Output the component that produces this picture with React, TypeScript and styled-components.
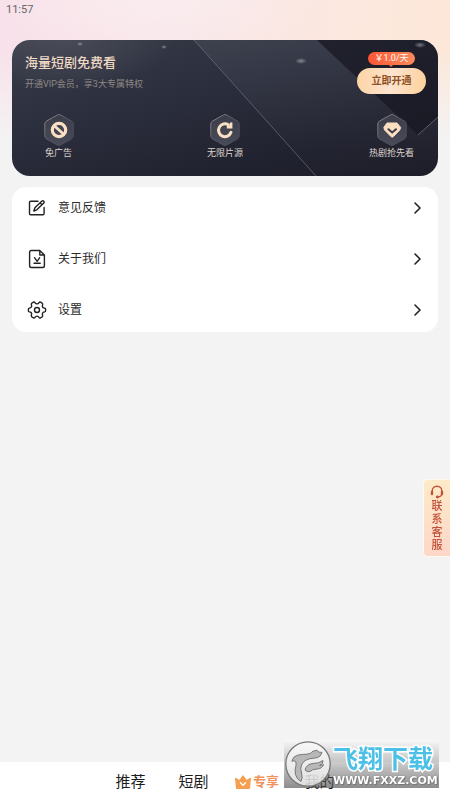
import React from "react";
import styled, { createGlobalStyle, css } from "styled-components";

const GlobalStyle = createGlobalStyle`
  *, *::before, *::after { box-sizing: border-box; }
  body {
    margin: 0;
    background: #f3f3f3;
    font-family: Roboto, "Noto Sans CJK SC", sans-serif;
    color: #2a2a2a;
  }
  button { border: 0; margin: 0; padding: 0; background: none; font: inherit; color: inherit; cursor: pointer; }
  a { color: inherit; text-decoration: none; }
  h1, p, ul { margin: 0; padding: 0; list-style: none; }
`;

const Page = styled.div`
  min-height: 100vh;
  display: flex;
  flex-direction: column;
  background:
    linear-gradient(180deg, rgba(243, 243, 243, 0) 0, rgba(243, 243, 243, 0) 50px, #f3f3f3 140px),
    radial-gradient(ellipse 160px 60px at 35% 0, rgba(250, 238, 240, 0.8), transparent),
    linear-gradient(100deg, #f8e1ea 0%, #f9e6ea 30%, #fce8dc 65%, #fce5d2 100%);
`;

const StatusBar = styled.header`
  height: 20px;
  padding-left: 6px;
  font-size: 11px;
  line-height: 20px;
  color: #666;
`;

const Main = styled.main`
  flex: 1;
  display: flex;
  flex-direction: column;
  gap: 11px;
  padding: 20px 12px;
`;

const VipCard = styled.section`
  position: relative;
  overflow: hidden;
  height: 136px;
  display: flex;
  flex-direction: column;
  justify-content: space-between;
  padding: 12px 12px 15px 13px;
  border-radius: 18px;
  background:
    radial-gradient(ellipse 110px 50px at 12% 0, rgba(110, 104, 118, 0.35), transparent),
    linear-gradient(165deg, #383d49 0%, #2b2e3d 40%, #21222f 75%, #1d1d29 100%);
`;

const CardArt = styled.svg`
  position: absolute;
  inset: 0;
  width: 100%;
  height: 100%;
`;

const VipTop = styled.div`
  position: relative;
  display: flex;
  justify-content: space-between;
`;

const VipTitle = styled.h1`
  font-size: 13px;
  line-height: 21px;
  font-weight: 500;
  color: #f0d9c5;
`;

const VipNote = styled.p`
  font-size: 9px;
  line-height: 22px;
  color: #8f8784;
`;

const Offer = styled.div`
  display: flex;
  flex-direction: column;
  align-items: center;
  gap: 3px;
`;

const Price = styled.span`
  position: relative;
  height: 13px;
  padding: 0 6px;
  border-radius: 7px;
  background: linear-gradient(90deg, #fb5733, #fc8a5c);
  color: #fff;
  font-size: 9px;
  line-height: 13px;

  &::after {
    content: "";
    position: absolute;
    left: 50%;
    top: 100%;
    margin-left: -2px;
    border: 2px solid transparent;
    border-top-color: #fb7048;
  }
`;

const OpenButton = styled.button`
  && {
    width: 69px;
    height: 26px;
    border-radius: 13px;
    background: linear-gradient(100deg, #fdd3a2, #fde4d0 50%, #fdd09a);
    color: #8f5024;
    font-size: 10px;
    line-height: 26px;
    font-weight: 700;
  }
`;

const Perks = styled.ul`
  && {
    position: relative;
    display: flex;
    justify-content: space-between;
    padding-right: 1px;
  }
`;

const Perk = styled.li`
  min-width: 67px;
  display: flex;
  flex-direction: column;
  align-items: center;
  font-size: 9px;
  line-height: 15px;
  color: #ded4cd;
`;

const MenuCard = styled.nav`
  display: flex;
  flex-direction: column;
  gap: 10px;
  padding-bottom: 2px;
  border-radius: 14px;
  background: #fff;
`;

const MenuRow = styled.a`
  height: 41px;
  display: flex;
  align-items: center;
  gap: 11px;
  padding: 0 15px;
  font-size: 12px;
  line-height: 18px;
`;

const MenuLabel = styled.span`
  flex: 1;
`;

const ServiceTab = styled.button`
  && {
    position: fixed;
    right: 0;
    top: 479px;
    width: 27px;
    padding: 5px 0 4px;
    display: flex;
    flex-direction: column;
    align-items: center;
    gap: 1px;
    border: 1px solid #fff8f0;
    border-right: 0;
    border-radius: 5px 0 0 5px;
    background: linear-gradient(170deg, #fdebc8, #fdd6c8);
    color: #c2513a;
    font-size: 11px;
    line-height: 13px;
    font-weight: 500;
  }
`;

const ServiceText = styled.span`
  width: 11px;
`;

const TabBar = styled.nav`
  height: 38px;
  padding-top: 1px;
  display: flex;
  justify-content: center;
  background: #fff;
`;

const Tab = styled.a<{ $accent?: boolean }>`
  width: 63px;
  display: flex;
  align-items: center;
  justify-content: center;
  gap: 1px;
  font-size: 15px;
  line-height: 22px;
  color: #1c1c1c;
  ${(p) =>
    p.$accent &&
    css`
      font-size: 13px;
      font-weight: 700;
      color: #f0935c;
    `}
`;

const Watermark = styled.aside`
  position: fixed;
  right: 11px;
  bottom: 12px;
  width: 155px;
  height: 48px;
  display: flex;
  gap: 2px;
  padding: 1px;
  background: linear-gradient(180deg, rgba(250, 250, 250, 0.5), rgba(130, 130, 130, 0.4) 45%, rgba(70, 70, 70, 0.62));
  pointer-events: none;
`;

const MarkText = styled.div`
  display: flex;
  flex-direction: column;
`;

const MarkName = styled.span`
  height: 33px;
  font-family: "Noto Sans CJK SC", sans-serif;
  font-size: 25px;
  line-height: 32px;
  font-weight: 700;
  color: #4cc0e6;
  -webkit-text-stroke: 3px #fff;
  paint-order: stroke fill;
`;

const MarkUrl = styled.span`
  font-family: "DejaVu Sans", sans-serif;
  font-size: 11px;
  line-height: 13px;
  font-weight: 700;
  color: #fff;
  text-shadow: 0 0 1px #555, 1px 1px 1px #777;
`;

const HexBadge = ({ children }: { children: React.ReactNode }) => (
  <svg width="30" height="32" viewBox="0 0 30 32" fill="none" aria-hidden="true">
    <path d="M13.500 .9q1.500-.8 3 0l11 6.200q1.700 1 1.700 2.800v12.200q0 1.800-1.700 2.800l-11 6.200q-1.500.8-3 0l-11-6.200q-1.700-1-1.700-2.800V9.900q0-1.800 1.700-2.800z" fill="url(#hexFill)" stroke="url(#hexEdge)" />
    {children}
  </svg>
);

const GradientDefs = () => (
  <defs>
    <linearGradient id="hexFill" x1="0" y1="0" x2="0" y2="1">
      <stop offset="0" stopColor="#3b3d49" />
      <stop offset="1" stopColor="#4a4b59" />
    </linearGradient>
    <linearGradient id="hexEdge" x1="0" y1="0" x2="1" y2="1">
      <stop offset="0" stopColor="#98918f" />
      <stop offset=".5" stopColor="#555562" />
      <stop offset="1" stopColor="#454654" />
    </linearGradient>
    <linearGradient id="facet" x1="0" y1="0" x2="0" y2="1">
      <stop offset="0" stopColor="#fff" stopOpacity=".06" />
      <stop offset="1" stopColor="#fff" stopOpacity="0" />
    </linearGradient>
    <radialGradient id="spark">
      <stop offset="0" stopColor="#fff" stopOpacity=".4" />
      <stop offset="1" stopColor="#fff" stopOpacity="0" />
    </radialGradient>
  </defs>
);

const BanIcon = () => (
  <HexBadge>
    <circle cx="15" cy="16" r="6.700" stroke="#f9dfc4" strokeWidth="3.200" />
    <path d="M10.500 12l9 8" stroke="#f9dfc4" strokeWidth="2.800" />
  </HexBadge>
);

const ReplayIcon = () => (
  <HexBadge>
    <path d="M18.500 10.900A6.400 6.400 0 1 0 21 18.300" stroke="#f9dfc4" strokeWidth="3" strokeLinecap="round" />
    <path d="M19.800 8.400h2.600v6h-5.600v-2.600h3z" fill="#f9dfc4" />
  </HexBadge>
);

const GemIcon = () => (
  <HexBadge>
    <path d="M10 9H20L23.600 13.400 22.800 16 16.400 22.600Q15.200 23.800 14 22.600L7.600 16 6.800 13.400z" fill="#fbdfc1" stroke="#fbdfc1" strokeLinejoin="round" />
    <path d="M11.400 15.200l3.800 3.300 3.800-3.300" stroke="#3e3c46" strokeWidth="2" strokeLinecap="round" />
  </HexBadge>
);

const lineIcon = {
  width: 20,
  height: 20,
  viewBox: "0 0 20 20",
  fill: "none",
  stroke: "#222",
  strokeWidth: 1.4,
  strokeLinecap: "round" as const,
  strokeLinejoin: "round" as const,
  "aria-hidden": true,
};

const FeedbackIcon = () => (
  <svg {...lineIcon}>
    <path d="M11 3.200H3.700q-1.200 0-1.200 1.200v11.200q0 1.200 1.200 1.200h12.200q1.200 0 1.200-1.200V9.500" />
    <path d="M6.800 13l1.100-3.300 7-6.600q1-.8 1.900.1t0 1.900l-7 6.700zM13.400 5l1.600 1.700" />
  </svg>
);

const AboutIcon = () => (
  <svg {...lineIcon}>
    <path d="M12.800 1.500H4.400Q2.600 1.500 2.600 3.300v13.400q0 1.800 1.800 1.800h11.200q1.800 0 1.800-1.800V6zM12.800 1.500V6h4.600" />
    <path d="M7.500 8.700l2.600 3.600 2.600-3.600M7 14.200h6.200" />
  </svg>
);

const SettingsIcon = () => (
  <svg {...lineIcon}>
    <path d="M6.500 2.200Q7.400 1.800 8 2.700 8.700 3.900 10 3.900T12 2.700Q12.600 1.800 13.500 2.200L15.200 3.200Q16 3.800 15.600 4.800 15 6.300 15.700 7.200 16.300 8 17.600 8.100 18.600 8.200 18.600 9.200V10.800Q18.600 11.800 17.600 11.900 16.300 12 15.700 12.800 15 13.700 15.600 15.200 16 16.200 15.200 16.800L13.500 17.800Q12.600 18.200 12 17.300 11.300 16.100 10 16.100T8 17.300Q7.400 18.200 6.500 17.800L4.800 16.800Q4 16.200 4.400 15.200 5 13.700 4.300 12.800 3.700 12 2.400 11.900 1.400 11.800 1.400 10.800V9.200Q1.400 8.200 2.400 8.100 3.700 8 4.300 7.200 5 6.300 4.400 4.800 4 3.800 4.800 3.200z" />
    <circle cx="10" cy="10" r="2.500" />
  </svg>
);

const ChevronIcon = () => (
  <svg width="12" height="12" viewBox="0 0 12 12" fill="none" stroke="#222" strokeWidth="1.600" strokeLinecap="round" strokeLinejoin="round" aria-hidden="true">
    <path d="M4 1l5 5-5 5" />
  </svg>
);

const HeadsetIcon = () => (
  <svg width="14" height="14" viewBox="0 0 14 14" fill="none" stroke="#c2513a" strokeWidth="1.400" strokeLinecap="round" aria-hidden="true">
    <path d="M2.200 7.500V6a4.800 4.800 0 0 1 9.600 0v3q-.4 2.800-3.800 3" />
    <path d="M2 7v2M12 7v2" strokeWidth="2.400" />
    <circle cx="7.300" cy="12" r=".7" />
  </svg>
);

const CrownIcon = () => (
  <svg width="18" height="16" viewBox="0 0 18 16" fill="none" aria-hidden="true">
    <path d="M1.800 4.600L5.600 7 9 2.200 12.400 7l3.800-2.400-1 9.600H2.800z" fill="#f4a050" stroke="#f4a050" strokeWidth="1.600" strokeLinejoin="round" />
    <path d="M6.500 8.800L9 11.200l2.500-2.400" stroke="#fff" strokeWidth="1.400" strokeLinecap="round" strokeLinejoin="round" />
  </svg>
);

const MarkLogo = () => (
  <svg width="46" height="46" viewBox="0 0 46 46" fill="none" aria-hidden="true">
    <circle cx="23" cy="23" r="22.200" fill="#f8f8f8" fillOpacity=".76" stroke="#777" strokeWidth="1.300" />
    <path d="M7 19.500q1-4 5.500-5.300 5-1 9.500-1 4-.4 6-3l4-1 1.500 1.800 3.500.4q-.6 4-5 5.300-3 .5-6 .8-7 1-9.500 6.500-1.500 4 0 8 1.500 5-.5 8.500-4.500-2.500-5.500-7-1-5 .5-9 .6-3-1-4.500-1.500-.7-3 .5z" fill="#b8b8b8" stroke="#777" />
    <path d="M20 29q1.500-6 8-6.500 6 0 10-3 .6 3.500-3.500 5 2.500.2 4-1-1 4-6.500 4.500-5 .2-7 2.500-3 1-5-1.500z" fill="#b8b8b8" stroke="#777" />
  </svg>
);

const perks = [
  { label: "免广告", Icon: BanIcon },
  { label: "无限片源", Icon: ReplayIcon },
  { label: "热剧抢先看", Icon: GemIcon },
];

const menu = [
  { label: "意见反馈", Icon: FeedbackIcon },
  { label: "关于我们", Icon: AboutIcon },
  { label: "设置", Icon: SettingsIcon },
];

export default function App() {
  return (
    <Page>
      <GlobalStyle />
      <StatusBar>11:57</StatusBar>
      <Main>
        <VipCard>
          <CardArt viewBox="0 0 426 136" preserveAspectRatio="none" aria-hidden="true">
            <GradientDefs />
            <path d="M182 0H305L406 95 426 77V136H304z" fill="url(#facet)" />
            <path d="M305 0H426V77L406 95z" fill="#171722" fillOpacity=".6" />
            <path d="M182 0L304 136" stroke="#7b7b8a" strokeOpacity=".6" />
            <path d="M406 95L426 77" stroke="#7b7b8a" strokeOpacity=".7" />
            <g fill="url(#spark)">
              <ellipse cx="68" cy="4" rx="3" ry="2" />
              <ellipse cx="152" cy="7" rx="3" ry="2" />
              <ellipse cx="289" cy="21" rx="6" ry="3" />
              <ellipse cx="408" cy="5" rx="6" ry="3" />
            </g>
          </CardArt>
          <VipTop>
            <div>
              <VipTitle>海量短剧免费看</VipTitle>
              <VipNote>开通VIP会员，享3大专属特权</VipNote>
            </div>
            <Offer>
              <Price>￥1.0/天</Price>
              <OpenButton type="button">立即开通</OpenButton>
            </Offer>
          </VipTop>
          <Perks>
            {perks.map(({ label, Icon }) => (
              <Perk key={label}>
                <Icon />
                {label}
              </Perk>
            ))}
          </Perks>
        </VipCard>
        <MenuCard aria-label="菜单">
          {menu.map(({ label, Icon }) => (
            <MenuRow key={label} href="#">
              <Icon />
              <MenuLabel>{label}</MenuLabel>
              <ChevronIcon />
            </MenuRow>
          ))}
        </MenuCard>
      </Main>
      <ServiceTab type="button">
        <HeadsetIcon />
        <ServiceText>联系客服</ServiceText>
      </ServiceTab>
      <TabBar aria-label="主导航">
        <Tab href="#">推荐</Tab>
        <Tab href="#">短剧</Tab>
        <Tab href="#" $accent>
          <CrownIcon />
          专享
        </Tab>
        <Tab href="#">我的</Tab>
      </TabBar>
      <Watermark>
        <MarkLogo />
        <MarkText>
          <MarkName>飞翔下载</MarkName>
          <MarkUrl>WWW.FXXZ.COM</MarkUrl>
        </MarkText>
      </Watermark>
    </Page>
  );
}
